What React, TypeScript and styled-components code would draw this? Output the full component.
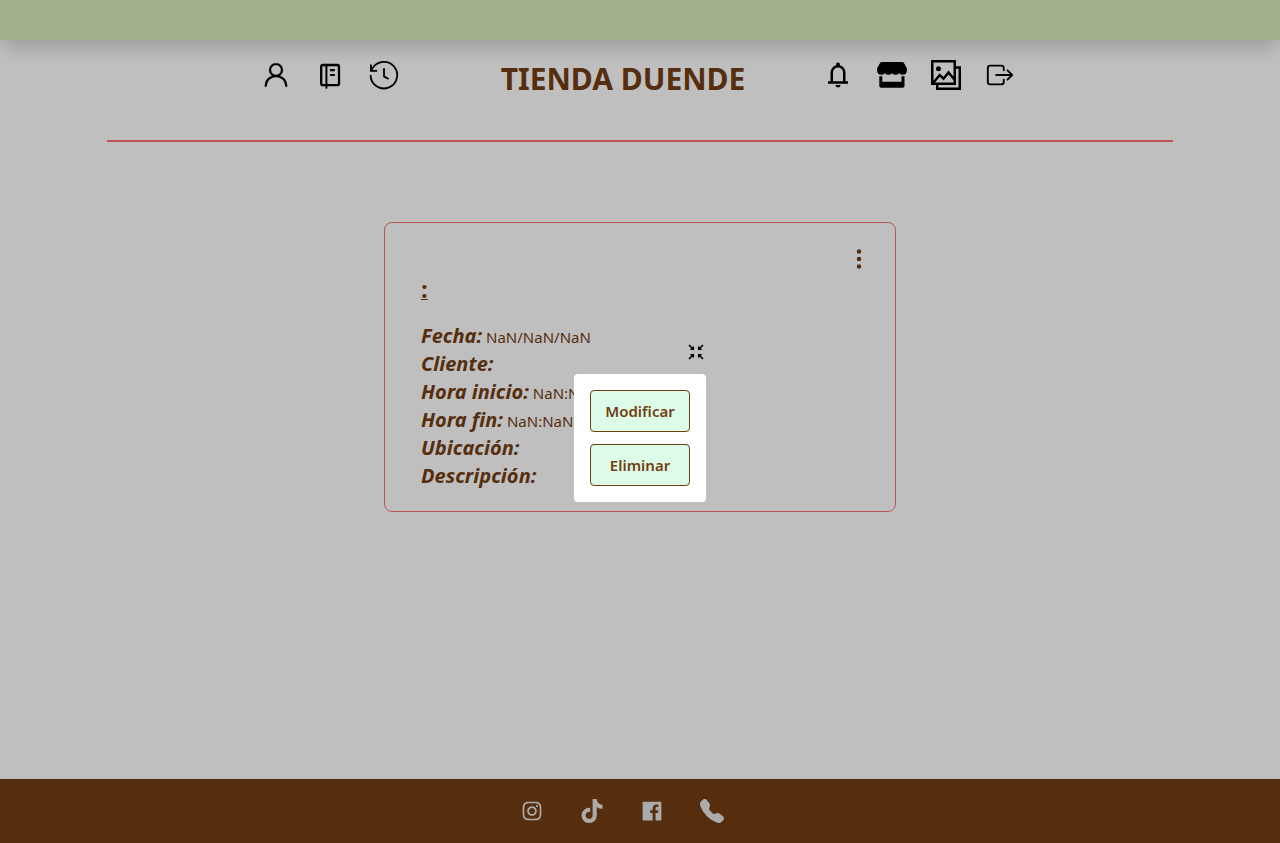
import React from "react";
import styled, { createGlobalStyle } from "styled-components";
import { GoPerson } from "react-icons/go";
import { FaTiktok } from "react-icons/fa6";
import { GrGallery } from "react-icons/gr";
import { IoExitOutline } from "react-icons/io5";
import { AiOutlineInstagram, AiFillFacebook } from "react-icons/ai";
import { BsTelephoneFill, BsThreeDotsVertical } from "react-icons/bs";

const brown = "#733e13";
const red = "#f87171";

const GlobalStyle = createGlobalStyle`
  *, *::before, *::after { box-sizing: border-box; }
  body {
    margin: 0;
    background: #fff;
    color: ${brown};
    font-family: "Segoe UI", "Noto Sans", sans-serif;
    font-size: 15px;
    line-height: 24px;
  }
`;

const Page = styled.div`
  min-height: 100vh;
  display: flex;
  flex-direction: column;
`;

const TopBar = styled.div`
  height: 40px;
  background: #d8ebbb;
  box-shadow: 0 10px 20px -3px rgba(0, 0, 0, 0.2);
`;

const Header = styled.header`
  width: 83.3333%;
  height: 102px;
  margin: 0 auto;
  padding: 20px 4px 0 0;
  border-bottom: 2px solid ${red};
  display: flex;
  justify-content: center;
  align-items: flex-start;
  gap: 78px;
`;

const IconGroup = styled.nav`
  display: flex;
  gap: 24px;
`;

const IconLink = styled.a<{ $size: number }>`
  display: block;
  color: inherit;
  width: ${(p) => p.$size}px;
  height: ${(p) => p.$size}px;
  svg {
    display: block;
    width: 100%;
    height: 100%;
  }
`;

const HeaderGroup = styled(IconGroup)`
  color: #000;
`;

const Title = styled.h1`
  margin: 0;
  padding-left: 24px;
  font-size: 30px;
  line-height: 38px;
  font-weight: 700;
  white-space: nowrap;
`;

const Main = styled.main`
  flex: 1;
  padding: 80px 16px;
`;

const Card = styled.article`
  width: 100%;
  max-width: 512px;
  margin: 0 auto;
  padding: 24px 24px 20px;
  border: 1px solid ${red};
  border-radius: 8px;
`;

const CardTools = styled.div`
  display: flex;
  justify-content: flex-end;
`;

const KebabButton = styled.button`
  width: 24px;
  height: 24px;
  padding: 0;
  border: 0;
  background: none;
  color: inherit;
  svg { display: block; }
`;

const CardBody = styled.div`
  padding: 0 12px;
`;

const CardTitle = styled.h2`
  margin: 4px 0 20px;
  font-size: 24px;
  line-height: 28px;
  font-weight: 700;
  text-decoration: underline;
  text-decoration-thickness: 1px;
`;

const Field = styled.p`
  margin: 0;
  line-height: 28px;
  strong {
    font-size: 20px;
    line-height: 24px;
    font-style: italic;
    font-weight: 700;
  }
`;

const Footer = styled.footer`
  height: 64px;
  padding-right: 36px;
  background: ${brown};
  color: #e5e5e5;
  display: flex;
  justify-content: center;
  align-items: center;
  gap: 36px;
`;

const Overlay = styled.div`
  position: fixed;
  inset: 0;
  background: rgba(0, 0, 0, 0.25);
  display: flex;
  justify-content: center;
  align-items: center;
`;

const Modal = styled.div`
  width: 132px;
  display: flex;
  flex-direction: column;
`;

const CloseButton = styled.button`
  align-self: flex-end;
  width: 20px;
  height: 20px;
  margin-bottom: 12px;
  padding: 2px;
  border: 0;
  background: none;
  color: #000;
  svg { display: block; }
`;

const ModalPanel = styled.div`
  padding: 16px;
  background: #fff;
  border-radius: 4px;
  display: flex;
  flex-direction: column;
  gap: 12px;
`;

const ActionButton = styled.button`
  height: 42px;
  padding: 0;
  border: 1px solid ${brown};
  border-radius: 4px;
  background: #dcfce7;
  color: ${brown};
  font: inherit;
  font-weight: 600;
`;

const NotebookIcon = () => (
  <svg viewBox="0 0 30 30" fill="none" stroke="currentColor" strokeWidth="2.3">
    <rect x="6.2" y="5" width="17.8" height="20.2" rx="1.8" />
    <path d="M11.4 5v23.6" strokeWidth="2" />
    <path d="M15 10.1h4.8M15 15h4.8" strokeWidth="2.1" />
  </svg>
);

const HistoryIcon = () => (
  <svg viewBox="0 0 30 30" fill="none" stroke="currentColor" strokeWidth="1.8">
    <path d="M1.6 15A13.3 13.3 0 1 0 3.3 8.6L2 10.9" />
    <path d="M1.9 4.6v6.2h6.2M15 8.2v8.2l4.6 2.6" />
  </svg>
);

const BellIcon = () => (
  <svg viewBox="0 0 24 24" fill="currentColor">
    <path d="M4 19v-2h2v-7q0-2.075 1.25-3.687T10.5 4.2v-.7q0-.625.438-1.062T12 2t1.063.438T13.5 3.5v.7q2 .5 3.25 2.113T18 10v7h2v2zm8 3q-.825 0-1.412-.587T10 20h4q0 .825-.587 1.413T12 22m-4-5h8v-7q0-1.65-1.175-2.825T12 6T9.175 7.175T8 10z" />
  </svg>
);

const StoreIcon = () => (
  <svg viewBox="0 0 30 30" fill="currentColor">
    <path d="M4.6 2h20.8q.9 0 1.4.8l2.6 4.6Q30 8.6 30 10q0 4.6-4.2 4.8-2.200 0-3.600-1.500-1.500 1.500-3.600 1.500t-3.600-1.500q-1.500 1.500-3.600 1.500t-3.600-1.500Q6.400 14.800 4.200 14.800 0 14.600 0 10q0-1.400.6-2.600L3.200 2.800Q3.700 2 4.600 2z" />
    <path d="M2.300 16.200q1.500.3 3-.1v5.600h19.200v-5.600q1.500.4 3 .1v9.700q0 1.800-1.800 1.800H4.100q-1.800 0-1.800-1.800z" />
  </svg>
);

const ShrinkIcon = () => (
  <svg width="16" height="16" viewBox="0 0 16 16" fill="currentColor" stroke="currentColor">
    <path d="M1 1l4 4M15 1l-4 4M1 15l4-4M15 15l-4-4" strokeWidth="1.7" />
    <path d="M6 1.8v4.200H1.800zM10 1.800v4.200h4.200zM6 14.200v-4.200H1.800zM10 14.200v-4.200h4.200z" stroke="none" />
  </svg>
);

const leftLinks = [
  { label: "Perfil", icon: <GoPerson strokeWidth={0.2} /> },
  { label: "Agenda", icon: <NotebookIcon /> },
  { label: "Historial", icon: <HistoryIcon /> },
];

const rightLinks = [
  { label: "Notificaciones", icon: <BellIcon /> },
  { label: "Tienda", icon: <StoreIcon /> },
  { label: "Galería", icon: <GrGallery /> },
  { label: "Salir", icon: <IoExitOutline /> },
];

const socialLinks = [
  { label: "Instagram", icon: <AiOutlineInstagram /> },
  { label: "TikTok", icon: <FaTiktok /> },
  { label: "Facebook", icon: <AiFillFacebook /> },
  { label: "Teléfono", icon: <BsTelephoneFill /> },
];

const fields = [
  { label: "Fecha:", value: "NaN/NaN/NaN" },
  { label: "Cliente:", value: "" },
  { label: "Hora inicio:", value: "NaN:NaN" },
  { label: "Hora fin:", value: "NaN:NaN" },
  { label: "Ubicación:", value: "" },
  { label: "Descripción:", value: "" },
];

type LinkItem = { label: string; icon: React.ReactNode };

const Links = ({ items, size }: { items: LinkItem[]; size: number }) => (
  <>
    {items.map((item) => (
      <IconLink key={item.label} href="#" aria-label={item.label} $size={size}>
        {item.icon}
      </IconLink>
    ))}
  </>
);

export default function App() {
  return (
    <>
      <GlobalStyle />
      <Page>
        <TopBar />
        <Header>
          <HeaderGroup>
            <Links items={leftLinks} size={30} />
          </HeaderGroup>
          <Title>TIENDA DUENDE</Title>
          <HeaderGroup>
            <Links items={rightLinks} size={30} />
          </HeaderGroup>
        </Header>
        <Main>
          <Card>
            <CardTools>
              <KebabButton aria-label="Opciones">
                <BsThreeDotsVertical size={24} />
              </KebabButton>
            </CardTools>
            <CardBody>
              <CardTitle>:</CardTitle>
              {fields.map((field) => (
                <Field key={field.label}>
                  <strong>{field.label}</strong> {field.value}
                </Field>
              ))}
            </CardBody>
          </Card>
        </Main>
        <Footer>
          <Links items={socialLinks} size={24} />
        </Footer>
      </Page>
      <Overlay>
        <Modal role="dialog" aria-label="Opciones">
          <CloseButton aria-label="Cerrar">
            <ShrinkIcon />
          </CloseButton>
          <ModalPanel>
            <ActionButton>Modificar</ActionButton>
            <ActionButton>Eliminar</ActionButton>
          </ModalPanel>
        </Modal>
      </Overlay>
    </>
  );
}
